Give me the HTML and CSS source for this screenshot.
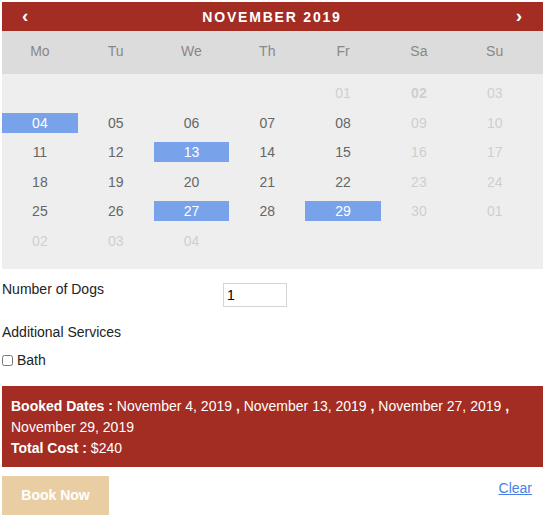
FILE: index.html
```html
<!DOCTYPE html>
<html lang="en">
<head>
    <meta charset="UTF-8">
    <title>Book a Walk</title>
    <link rel="stylesheet" href="styles.css">
</head>
<body>
<div class="booking">
    <div class="calendar">
        <div class="cal-head">
            <span class="nav">&#x2039;</span>
            <span class="month">NOVEMBER 2019</span>
            <span class="nav">&#x203A;</span>
        </div>
        <div class="weekdays">
            <span>Mo</span><span>Tu</span><span>We</span><span>Th</span><span>Fr</span><span>Sa</span><span>Su</span>
        </div>
        <div class="days">
            <span></span><span></span><span></span><span></span>
            <span class="off">01</span><span class="off today">02</span><span class="off">03</span>
            <span class="sel">04</span><span>05</span><span>06</span><span>07</span><span>08</span><span class="off">09</span><span class="off">10</span>
            <span>11</span><span>12</span><span class="sel">13</span><span>14</span><span>15</span><span class="off">16</span><span class="off">17</span>
            <span>18</span><span>19</span><span>20</span><span>21</span><span>22</span><span class="off">23</span><span class="off">24</span>
            <span>25</span><span>26</span><span class="sel">27</span><span>28</span><span class="sel">29</span><span class="off">30</span><span class="off">01</span>
            <span class="off">02</span><span class="off">03</span><span class="off">04</span>
        </div>
    </div>

    <div class="field">
        <label for="dogs">Number of Dogs</label>
        <input type="text" id="dogs" value="1">
    </div>
    <div class="services">Additional Services</div>
    <label class="check"><input type="checkbox"> Bath</label>

    <div class="summary">
        <b>Booked Dates :</b> November 4, 2019 <b>,</b> November 13, 2019 <b>,</b> November 27, 2019 <b>,</b> November 29, 2019<br>
        <b>Total Cost :</b> $240
    </div>

    <div class="actions">
        <button type="button" class="book">Book Now</button>
        <a href="#" class="clear">Clear</a>
    </div>
</div>
</body>
</html>
```

FILE: styles.css
```css
body { margin: 0; padding: 2px; font-family: 'Liberation Sans', Arial, sans-serif; font-size: 14px; color: #222; }
.booking { width: 541px; }

.calendar { background: #eeeeee; }
.cal-head { background: #a32c23; color: #fff; height: 29px; display: flex; align-items: center; justify-content: space-between; padding: 0 21px 0 20px; }
.cal-head .nav { font-size: 19px; font-weight: bold; line-height: 1; margin-top: -3px; }
.cal-head .month { font-size: 14px; font-weight: bold; letter-spacing: 1.8px; }

.weekdays { background: #dcdcdc; height: 43px; display: grid; grid-template-columns: repeat(7, 75.8px); align-items: center; color: #888; }
.weekdays span { text-align: center; position: relative; top: -2px; }

.days { display: grid; grid-template-columns: repeat(7, 75.8px); grid-auto-rows: 20px; row-gap: 9.5px; padding: 9px 0 18px; color: #666; }
.days span { text-align: center; line-height: 20px; }
.days .off { color: #cfcfcf; }
.days .today { font-weight: bold; }
.days .sel { background: #78a2ea; color: #fff; }

.field { display: flex; align-items: flex-start; margin-top: 12px; }
.field label { width: 221px; }
.field input { width: 56px; height: 20px; padding: 1px 3px; border: 1px solid #d4d4d4; font-size: 14px; font-family: inherit; margin-top: 2px; }
.services { margin-top: 17px; }
.check { display: flex; align-items: center; margin-top: 12px; }
.check input { margin: 1px 4px 0 0; width: 11px; height: 11px; }

.summary { background: #a32c23; color: #fff; margin-top: 18px; padding: 10px 9px 8px; line-height: 21px; }

.actions { display: flex; justify-content: space-between; align-items: flex-start; margin-top: 9px; }
.book { background: #e9cea3; color: #fff; border: none; width: 107px; height: 39px; font-size: 14px; font-weight: bold; font-family: inherit; cursor: pointer; }
.clear { color: #4a7fe6; margin-top: 4px; margin-right: 11px; }
```
